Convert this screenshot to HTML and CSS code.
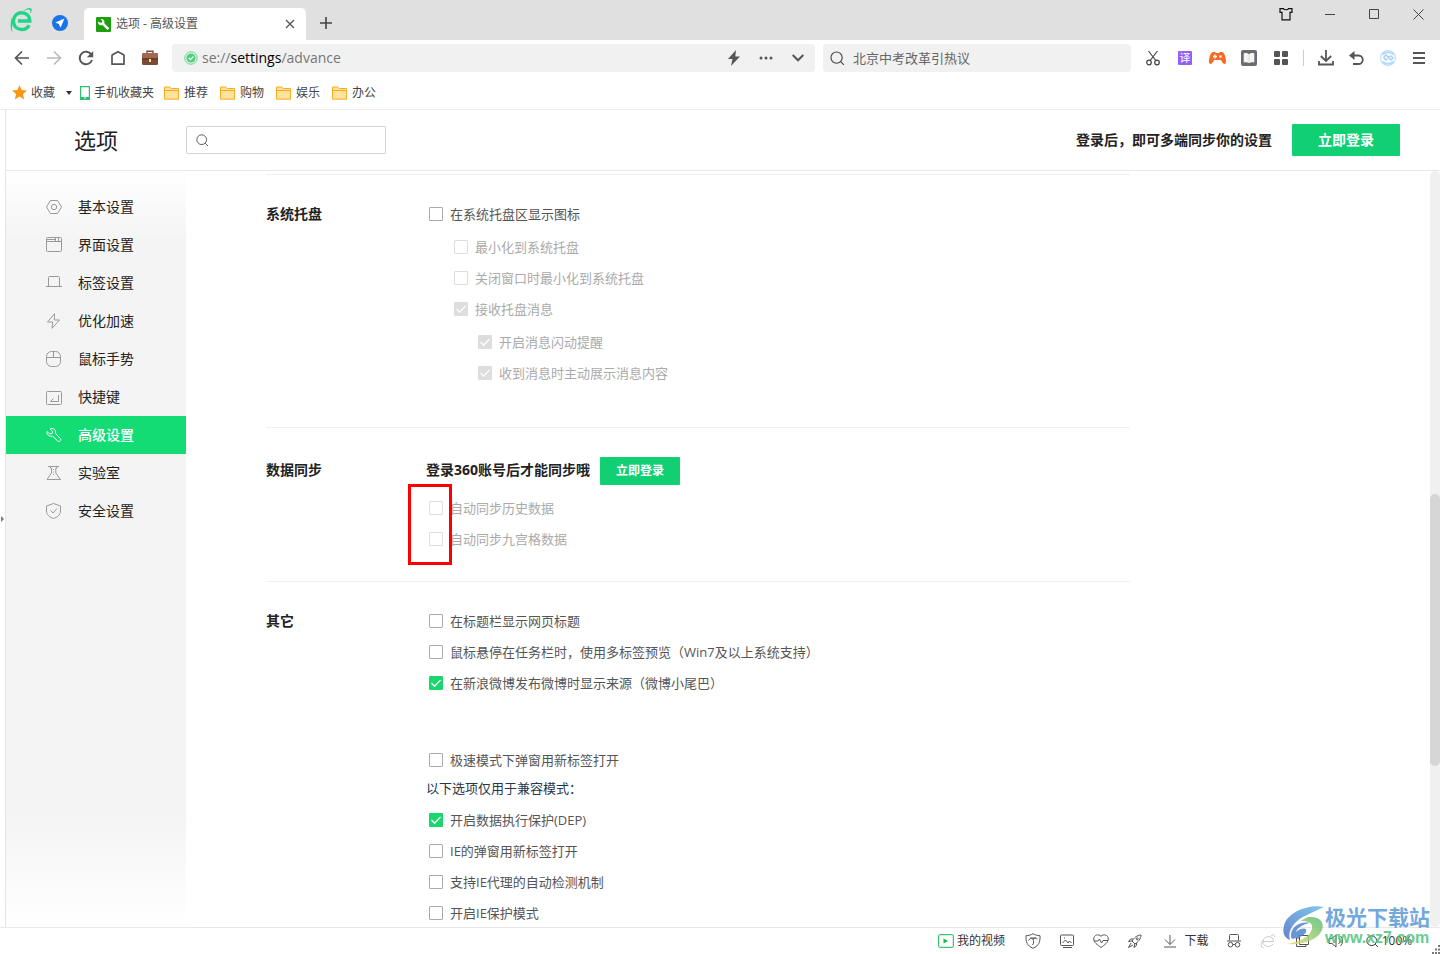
FILE: index.html
```html
<!DOCTYPE html>
<html lang="zh-CN">
<head>
<meta charset="utf-8">
<title>选项 - 高级设置</title>
<link rel="stylesheet" href="styles.css">
</head>
<body>
<svg class="defs" aria-hidden="true">
  <symbol id="folder" viewBox="0 0 16 14"><path d="M.5 1h5.2l1.600 1.500h7.200v10.700H.5z" fill="#ffe1a0" stroke="#f9ab1f"/><path d="M1 4.500h13" stroke="#f9ab1f"/></symbol>
  <symbol id="lens" viewBox="0 0 16 16"><circle cx="7" cy="7" r="6" fill="none" stroke="currentColor" stroke-width="1.2"/><path d="M11.4 11.4l3.4 3.4" stroke="currentColor" stroke-width="1.2"/></symbol>
</svg>

<header class="titlebar">
  <button class="app-logo" aria-label="浏览器"><svg width="24" height="26" viewBox="0 0 24 26"><path d="M3.400 13.500C4 8.500 7.500 5.700 11.500 5.700c5 0 8.300 3.300 8.300 8.300H8M3.300 13c0 6.500 3.700 9.500 8.200 9.500 3.700 0 6.300-1.600 7.600-4.300" fill="none" stroke="#1fd587" stroke-width="3.400"/><path d="M12 5C16 1 20.500 0 21.500 1.800c.6 1.200 0 3-1.200 4.600.3-1.700.2-2.900-.7-3.400C18 2 15 3 12 5zM2 10C.5 15-.3 22 2.500 25c-1-4-.3-8 .8-11z" fill="#1fd587"/></svg></button>
  <button class="compass" aria-label="导航"><svg width="16" height="16" viewBox="0 0 16 16"><circle cx="8" cy="8" r="8" fill="#1a73e8"/><path d="M12.500 3.500L3.300 7.600l3.600 1.400L8.500 12.700z" fill="#fff"/></svg></button>
  <div class="tab">
    <svg width="15" height="15" viewBox="0 0 15 15"><rect width="15" height="15" rx="1" fill="#1f9e12"/><path d="M2 4.500A3.200 3.200 0 0 0 6.500 8l5 5 1.800-1.800-5-5A3.200 3.200 0 0 0 4.600 2l1.700 1.900-.3 1.500-1.600.4z" fill="#fff"/></svg>
    <span class="tab-title">选项 - 高级设置</span>
    <button aria-label="关闭标签"><svg width="10" height="10" viewBox="0 0 10 10"><path d="M1 1l8 8M9 1L1 9" stroke="#555" stroke-width="1.300"/></svg></button>
  </div>
  <button class="new-tab" aria-label="新建标签"><svg width="12" height="12" viewBox="0 0 12 12"><path d="M6 0v12M0 6h12" stroke="#444" stroke-width="1.600"/></svg></button>
  <div class="window-controls">
    <button aria-label="皮肤"><svg width="14" height="13" viewBox="0 0 14 13"><path d="M1 .600h3.500c.5 1.500 4.500 1.500 5 0H13v3.800h-2v7.500H3V4.400H1z" fill="none" stroke="#111" stroke-width="1.200"/></svg></button>
    <button aria-label="最小化"><svg width="10" height="10" viewBox="0 0 10 10"><path d="M0 5.500h10" stroke="#444"/></svg></button>
    <button aria-label="最大化"><svg width="10" height="10" viewBox="0 0 10 10"><path d="M.5.500h9v9h-9z" fill="none" stroke="#444"/></svg></button>
    <button aria-label="关闭"><svg width="11" height="11" viewBox="0 0 11 11"><path d="M.5.500l10 10M10.500.500l-10 10" stroke="#444"/></svg></button>
  </div>
</header>

<nav class="toolbar" aria-label="工具栏">
  <div class="tools">
    <button aria-label="后退"><svg width="16" height="16" viewBox="0 0 16 16"><path d="M15 8H2M8 1.500L1.500 8 8 14.500" fill="none" stroke="#555" stroke-width="1.700"/></svg></button>
    <button aria-label="前进"><svg width="16" height="16" viewBox="0 0 16 16"><path d="M1 8h13M8 1.500L14.500 8 8 14.500" fill="none" stroke="#bbb" stroke-width="1.700"/></svg></button>
    <button aria-label="刷新"><svg width="16" height="16" viewBox="0 0 16 16"><path d="M13.300 4.500A6.300 6.300 0 1 0 14 10" fill="none" stroke="#555" stroke-width="1.900"/><path d="M15.200 1v6.300H8.800z" fill="#555"/></svg></button>
    <button aria-label="主页"><svg width="16" height="16" viewBox="0 0 16 16"><path d="M2 5.500Q2 5 2.500 4.700L8 1.700l5.500 3q.5.300.5.800v8.700H2z" fill="none" stroke="#555" stroke-width="1.700" stroke-linejoin="round"/></svg></button>
    <button aria-label="工具箱"><svg width="16" height="16" viewBox="0 0 16 16"><path d="M5 3V1.200h6V3" fill="none" stroke="#7a4938" stroke-width="1.400"/><rect y="3" width="16" height="12" rx="1.500" fill="#7b4b38"/><rect y="3" width="16" height="5" rx="1.500" fill="#a5674d"/><path d="M0 9h16" stroke="#54301f"/><rect x="7" y="9" width="2" height="3" fill="#ffe08a"/></svg></button>
  </div>
  <div class="address">
    <svg width="14" height="14" viewBox="0 0 14 14"><circle cx="7" cy="7" r="6.200" fill="none" stroke="#5fd88a"/><circle cx="7" cy="7" r="4.600" fill="#4fd07e"/><path d="M4.800 7l1.700 1.700L9.400 5.500" fill="none" stroke="#fff" stroke-width="1.200"/></svg>
    <span class="url">se://<b>settings</b>/advance</span>
    <button aria-label="极速模式"><svg width="14" height="16" viewBox="0 0 14 16"><path d="M9 0L1 9h4.500L4 16l9-9.500H8.300z" fill="#555"/></svg></button>
    <button aria-label="更多"><svg width="14" height="4" viewBox="0 0 14 4"><g fill="#555"><circle cx="2" cy="2" r="1.500"/><circle cx="7" cy="2" r="1.500"/><circle cx="12" cy="2" r="1.500"/></g></svg></button>
    <button aria-label="展开"><svg width="12" height="8" viewBox="0 0 12 8"><path d="M.7 1L6 6.300 11.300 1" fill="none" stroke="#555" stroke-width="2"/></svg></button>
  </div>
  <label class="websearch">
    <svg width="15" height="15"><use href="#lens"/></svg>
    <input type="text" placeholder="北京中考改革引热议" aria-label="搜索">
  </label>
  <div class="tools">
    <button aria-label="截图"><svg width="14" height="16" viewBox="0 0 14 16"><g fill="none" stroke="#444" stroke-width="1.200"><circle cx="3" cy="12.500" r="2.300"/><circle cx="11" cy="12.500" r="2.300"/><path d="M2.500 1L9.800 10.500M11.500 1L4.200 10.500"/></g></svg></button>
    <button class="translate" aria-label="翻译"><span>译</span></button>
    <button aria-label="游戏"><svg width="17" height="14" viewBox="0 0 17 14"><path d="M4 1h2l1 1h3l1-1h2c2 0 4 5 4 9.500 0 3.500-2.500 3-4 .5L12 9H5l-1 2c-1.500 2.500-4 3-4-.5C0 6 2 1 4 1z" fill="#fb6a25"/><path d="M4 5.500h4M6 3.500v4" stroke="#fff" stroke-width="1.300"/><circle cx="11.500" cy="5.500" r="1.300" fill="#fff"/></svg></button>
    <button aria-label="阅读"><svg width="16" height="16" viewBox="0 0 16 16"><rect width="16" height="16" rx="2" fill="#6b6b72"/><path d="M2.700 3.500c2-.8 4-.3 5.300.8 1.300-1.100 3.300-1.600 5.300-.8v9c-2-.5-4-.2-5.300.5-1.300-.7-3.300-1-5.300-.5z" fill="#f4f4f0"/><path d="M8 4.500V13" stroke="#ddd"/></svg></button>
    <button aria-label="扩展"><svg width="14" height="14" viewBox="0 0 14 14"><g fill="#555"><rect width="6" height="6" rx="1"/><rect x="8" width="6" height="6" rx="1"/><rect y="8" width="6" height="6" rx="1"/><rect x="8" y="8" width="6" height="6" rx="1"/></g></svg></button>
  </div>
  <i class="divider"></i>
  <div class="tools narrow">
    <button aria-label="下载"><svg width="16" height="16" viewBox="0 0 16 16"><path d="M8 0v11M2.800 6L8 11l5.200-5M1 11v3.500h14V11" fill="none" stroke="#555" stroke-width="1.800"/></svg></button>
    <button aria-label="恢复"><svg width="15" height="14" viewBox="0 0 15 14"><path d="M2 4.500h7.500a4.200 4.200 0 0 1 0 8.500H4" fill="none" stroke="#555" stroke-width="1.800"/><path d="M5.500 0v9L0 4.500z" fill="#555"/></svg></button>
    <button aria-label="账号"><svg width="16" height="16" viewBox="0 0 16 16"><circle cx="8" cy="8" r="7.400" fill="#fff" stroke="#bfdffa" stroke-width="1.200"/><path d="M2.500 4.500C5 1.500 11 1.500 13.500 4.500M2.500 11.500c2.500 3 8.500 3 11 0" fill="none" stroke="#b4dafa" stroke-width="2"/><path d="M3.500 7.500L6 5l5 5 2-2-2.500-2.500M3.500 7.500L6 10l1.500-1.500M8.500 7.500L10 6" fill="none" stroke="#9fcdf8" stroke-width="1.400"/></svg></button>
    <button aria-label="菜单"><svg width="12" height="12" viewBox="0 0 12 12"><path d="M0 1h12M0 6h12M0 11h12" stroke="#555" stroke-width="2"/></svg></button>
  </div>
</nav>

<nav class="bookmarks" aria-label="收藏栏">
  <a class="fav" href="#"><svg width="15" height="15" viewBox="0 0 15 15"><path d="M7.500 0l2.100 5.100 5.400.4-4.100 3.600 1.300 5.400-4.700-2.900-4.700 2.900 1.300-5.400L0 5.500l5.400-.4z" fill="#fb9612"/></svg>收藏<svg class="caret" width="6" height="4" viewBox="0 0 6 4"><path d="M0 0h6L3 4z" fill="#333"/></svg></a>
  <a class="phone" href="#"><svg width="10" height="14" viewBox="0 0 10 14"><path d="M.6.600h8.800v12.800H.6z" fill="#fff" stroke="#2fbf71" stroke-width="1.200"/><path d="M1 11h8v2H1z" fill="#2fbf71"/><path d="M4 12h2" stroke="#fff"/></svg>手机收藏夹</a>
  <a href="#"><svg width="16" height="14"><use href="#folder"/></svg>推荐</a>
  <a href="#"><svg width="16" height="14"><use href="#folder"/></svg>购物</a>
  <a href="#"><svg width="16" height="14"><use href="#folder"/></svg>娱乐</a>
  <a href="#"><svg width="16" height="14"><use href="#folder"/></svg>办公</a>
</nav>

<div class="viewport">
  <button class="side-handle" aria-label="展开侧栏"><svg width="3" height="6" viewBox="0 0 3 6"><path d="M0 0l3 3-3 3z" fill="#777"/></svg></button>
  <div class="page">
    <header class="page-head">
      <h1>选项</h1>
      <label class="find"><svg width="13" height="13"><use href="#lens"/></svg><input type="text" aria-label="搜索设置"></label>
      <p>登录后，即可多端同步你的设置</p>
      <button class="primary large">立即登录</button>
    </header>
    <div class="page-body">
      <nav class="menu" aria-label="设置分类">
        <a href="#"><svg viewBox="0 0 16 16"><path d="M4.500 1.500h7L15.500 8l-4 6.500h-7L.5 8z"/><circle cx="8" cy="8" r="2.700"/></svg>基本设置</a>
        <a href="#"><svg viewBox="0 0 16 16"><rect x=".5" y=".500" width="15" height="14" rx="1"/><path d="M1 4.500h14M9.500 1v3M12.500 1v3M1 2.500h8"/></svg>界面设置</a>
        <a href="#"><svg viewBox="0 0 16 16"><path d="M2.500 11V2.500a1 1 0 0 1 1-1h9a1 1 0 0 1 1 1V11M0 11.500h16"/></svg>标签设置</a>
        <a href="#"><svg viewBox="0 0 16 16"><path d="M8.500.700L1.500 9h5.200L6 15.300 13.500 7H8.300z"/></svg>优化加速</a>
        <a href="#"><svg viewBox="0 0 16 16"><rect x=".5" y=".500" width="14" height="15" rx="5"/><path d="M.5 6.500h14M7.500 1v5.500"/></svg>鼠标手势</a>
        <a href="#"><svg viewBox="0 0 16 16"><rect x=".5" y="2.500" width="15" height="13" rx="1"/><path d="M12.500 6v6.500h-8l3-3"/></svg>快捷键</a>
        <a class="current" href="#" aria-current="page"><svg viewBox="0 0 16 16"><path d="M5 1.500C8 1 10 3 9.300 6.200l5 5.300c1.500 1.700-1 4-2.600 2.500L6.500 9C3.500 10 .500 8 1 4.500L3.700 7 6.500 6V4.200L4.200 2z"/></svg>高级设置</a>
        <a href="#"><svg viewBox="0 0 16 16"><path d="M2 1.500h11M4.500 1.500v1.700h1V8L1 14.500h13.500L9.800 8V3.200h1V1.500M7.500 4v1M7.500 6.500v1M7.500 9v1"/></svg>实验室</a>
        <a href="#"><svg viewBox="0 0 16 16"><path d="M7.500.500L14.500 3v5c0 4-3.500 6.300-7 7.500C4 14.300.500 12 .500 8V3zM4.500 7.500l2.500 2.500 4-4.500"/></svg>安全设置</a>
      </nav>

      <main class="settings">
        <section>
          <h2>系统托盘</h2>
          <div>
            <label class="opt"><input type="checkbox">在系统托盘区显示图标</label>
            <div class="sub">
              <label class="opt"><input type="checkbox" disabled>最小化到系统托盘</label>
              <label class="opt"><input type="checkbox" disabled>关闭窗口时最小化到系统托盘</label>
              <label class="opt"><input type="checkbox" disabled checked>接收托盘消息</label>
              <div class="sub">
                <label class="opt"><input type="checkbox" disabled checked>开启消息闪动提醒</label>
                <label class="opt"><input type="checkbox" disabled checked>收到消息时主动展示消息内容</label>
              </div>
            </div>
          </div>
        </section>
        <section class="sync">
          <h2>数据同步</h2>
          <div>
            <div class="login-line"><strong>登录360账号后才能同步哦</strong><button class="primary">立即登录</button></div>
            <div class="marked">
              <label class="opt"><input type="checkbox" disabled>自动同步历史数据</label>
              <label class="opt"><input type="checkbox" disabled>自动同步九宫格数据</label>
              <i class="highlight"></i>
            </div>
          </div>
        </section>
        <section class="others">
          <h2>其它</h2>
          <div>
            <label class="opt"><input type="checkbox">在标题栏显示网页标题</label>
            <label class="opt"><input type="checkbox">鼠标悬停在任务栏时，使用多标签预览（Win7及以上系统支持）</label>
            <label class="opt"><input type="checkbox" checked>在新浪微博发布微博时显示来源（微博小尾巴）</label>
            <div class="modes">
              <label class="opt"><input type="checkbox">极速模式下弹窗用新标签打开</label>
              <p>以下选项仅用于兼容模式：</p>
              <label class="opt"><input type="checkbox" checked>开启数据执行保护(DEP)</label>
              <label class="opt"><input type="checkbox">IE的弹窗用新标签打开</label>
              <label class="opt"><input type="checkbox">支持IE代理的自动检测机制</label>
              <label class="opt"><input type="checkbox">开启IE保护模式</label>
            </div>
          </div>
        </section>
      </main>
      <div class="track"><i class="thumb"></i></div>
    </div>
  </div>
</div>

<footer class="status">
  <button class="video"><svg width="16" height="14" viewBox="0 0 16 14"><rect class="frame" x=".7" y=".700" width="14.600" height="12.600" rx="1"/><path class="play" d="M5.500 4.500l4.500 2.500-4.500 2.500z"/></svg>我的视频</button>
  <button aria-label="安全"><svg viewBox="0 0 16 16"><path d="M8 .700C6 2 3.500 2.600 1 2.700c-.3 6 1 10 7 12.600 6-2.600 7.300-6.600 7-12.600C12.500 2.600 10 2 8 .700zM3.500 7.500C4.500 5.500 6 5 8 6c1.500-1.500 3.500-1 4.500 0M8 6c1 2 .8 4-.5 6M5 5h6"/></svg></button>
  <button aria-label="图片"><svg viewBox="0 0 16 16"><rect x="1.500" y="2" width="13" height="10.500" rx="1"/><path d="M3.500 10l3-3 2.500 3 1.500-2 2 2M4 14.500h9M5 5h1"/></svg></button>
  <button aria-label="健康"><svg viewBox="0 0 16 16"><path d="M8 3.300C5.500.500.700 2 .700 6c0 3.300 3.800 6 7.300 8.500C11.500 12 15.300 9.300 15.300 6c0-4-4.800-5.500-7.300-2.700zM1 8h4l1.500-2 2 4L10 7.500h5"/></svg></button>
  <button aria-label="加速"><svg viewBox="0 0 16 16"><path d="M14 2c-4 0-7 3-9 6l3 3c3-2 6-5 6-9zM6 6H3.500L1.500 8.500 5 8M9.500 10v2.500L7 14.500l.8-3.700M4 10l-2.500 4.500L6 12"/><circle cx="10.200" cy="5.800" r="1"/></svg></button>
  <button class="download"><svg width="12" height="14" viewBox="0 0 12 14"><path d="M6 1v9.500M1 5.500l5 5 5-5M0 13h12"/></svg>下载</button>
  <button aria-label="无痕"><svg viewBox="0 0 16 16"><path d="M3.500 7.500v-5a1 1 0 0 1 1-1h7a1 1 0 0 1 1 1v5M1 8h14M6.700 11.500h2.600"/><circle cx="4.500" cy="11.700" r="2.300"/><circle cx="11.500" cy="11.700" r="2.300"/></svg></button>
  <button class="dim" aria-label="兼容模式"><svg viewBox="0 0 16 16"><path d="M3 8.500h10.500C13.500 5 11 3.500 8.500 3.500S3 5.500 3 8.500s2 5 5 5c2 0 4-.8 5-2.500M11 3c2.500-2 4-1.500 3.500 1.500M3 7C.5 11 .5 15 3.500 14.500"/></svg></button>
  <button aria-label="分屏"><svg viewBox="0 0 16 16"><path d="M5.500 2.500h9v9h-9zM5 5H2.500v8.500H12V12"/></svg></button>
  <button aria-label="声音"><svg viewBox="0 0 16 16"><path d="M1 5.500h3L8 2v12L4 10.500H1zM10.500 5a4 4 0 0 1 0 6M12.500 3a7 7 0 0 1 0 10"/></svg></button>
  <button class="zoom"><svg width="13" height="13"><use href="#lens"/></svg>100%</button>
  <svg class="grip" width="9" height="9" viewBox="0 0 9 9"><path d="M7 0h2v2H7zM4 3.500h2v2H4zM7 3.500h2v2H7zM1 7h2v2H1zM4 7h2v2H4zM7 7h2v2H7z"/></svg>
</footer>

<div class="watermark">
  <svg width="42" height="40" viewBox="0 0 42 40"><defs><linearGradient id="wa" x1="0" y1="1" x2="1" y2="0"><stop offset="0" stop-color="#4c6fc0"/><stop offset="1" stop-color="#69c0f0"/></linearGradient><linearGradient id="wb" x1="0" y1="1" x2="1" y2="0"><stop offset="0" stop-color="#e3df72"/><stop offset="1" stop-color="#55bd78"/></linearGradient></defs><path d="M41 1C26-2 4 6 1 20c-2 8 1 12 6 14C4 24 12 14 24 9c6-3 12-6 17-8z" fill="url(#wa)"/><path d="M26 11c10-1 16 5 13 13C35 34 20 39 4 38c12-2 23-7 25-15 1-6-3-8-11-8 3-2 5-3.500 8-4z" fill="url(#wb)"/><path d="M8 31C7 21 17 15 27 17c-7 1-13 5-14 9 4-4 12-5 10 0-2 4-8 6-14 7z" fill="#4f86cf"/></svg>
  <div><b>极光下载站</b><span>www.xz7.com</span></div>
</div>
</body>
</html>
```

FILE: styles.css
```css
* { box-sizing: border-box; }
body {
  margin: 0;
  height: 100vh;
  display: flex;
  flex-direction: column;
  overflow: hidden;
  background: #fff;
  color: #222;
  font: 13px/20px "Open Sans", "Noto Sans CJK SC", sans-serif;
}
button {
  display: flex;
  align-items: center;
  justify-content: center;
  padding: 0;
  border: 0;
  background: none;
  color: inherit;
  font: inherit;
}
a { color: inherit; text-decoration: none; }
h1, h2, p { margin: 0; }
svg { flex: none; display: block; }
input { font: inherit; color: inherit; outline: 0; }
.defs { position: absolute; width: 0; height: 0; }

/* Window chrome */
.titlebar {
  flex: none;
  height: 40px;
  display: flex;
  align-items: center;
  padding-left: 10px;
  background: #e0e0e0;
}
.compass { margin: 6px 16px 0 18px; }
.tab {
  align-self: flex-end;
  width: 222px;
  height: 32px;
  display: flex;
  align-items: center;
  gap: 5px;
  padding: 0 11px 0 12px;
  border-radius: 5px 5px 0 0;
  background: #fff;
  color: #555;
  font-size: 12px;
}
.tab-title { flex: 1; }
.new-tab { margin: 6px 0 0 14px; }
.window-controls {
  align-self: flex-start;
  margin-left: auto;
  height: 28px;
  display: flex;
}
.window-controls button { width: 44px; }

.toolbar {
  flex: none;
  display: flex;
  align-items: center;
  padding: 4px 6px;
}
.tools { display: flex; }
.tools button { width: 32px; height: 28px; }
.tools.narrow button { width: 31px; }
.address, .websearch {
  height: 28px;
  display: flex;
  align-items: center;
  border-radius: 4px;
  background: #f1f1f1;
}
.address {
  flex: 1;
  margin: 0 8px 0 6px;
  padding: 0 3px 0 12px;
  gap: 4px;
}
.address button { width: 28px; height: 28px; }
.url { flex: 1; color: #777; font-size: 14px; }
.url b { color: #000; font-weight: 400; }
.websearch {
  flex: 0 1 308px;
  margin-right: 6px;
  padding: 0 7px;
  gap: 8px;
  color: #444;
}
.websearch input, .find input {
  flex: 1;
  min-width: 0;
  padding: 0;
  border: 0;
  background: none;
}
.websearch input::placeholder { color: #666; opacity: 1; }
.translate span {
  width: 14px;
  height: 14px;
  border-radius: 1px;
  background: #9161f3;
  color: #fff;
  font-size: 11px;
  line-height: 14px;
}
.divider { width: 1px; height: 16px; margin: 0 6px; background: #ccc; }

.bookmarks {
  flex: none;
  height: 34px;
  display: flex;
  align-items: center;
  gap: 12px;
  padding-left: 12px;
  border-bottom: 1px solid #ebebeb;
  color: #444;
  font-size: 12px;
}
.bookmarks a { display: flex; align-items: center; gap: 4px; }
.bookmarks .fav { margin-right: -4px; }
.bookmarks .phone { margin-right: -2px; }
.caret { margin-left: 7px; }

/* Settings page */
.viewport { flex: 1; min-height: 0; display: flex; }
.side-handle { width: 5px; justify-content: center; }
.page {
  flex: 1;
  min-width: 0;
  display: flex;
  flex-direction: column;
  border-left: 1px solid #e4e4e4;
}
.page-head {
  flex: none;
  height: 61px;
  display: flex;
  align-items: center;
  padding-right: 40px;
  border-bottom: 1px solid #e8e8e8;
}
h1 { width: 180px; text-align: center; font-size: 22px; font-weight: 400; line-height: 32px; }
.find {
  width: 200px;
  height: 28px;
  display: flex;
  align-items: center;
  gap: 8px;
  padding: 0 9px;
  border: 1px solid #d4d4d4;
  border-radius: 1px;
  color: #555;
}
.page-head p { margin: 0 20px 0 auto; font-size: 14px; font-weight: 700; }
.primary {
  width: 80px;
  height: 28px;
  border-radius: 1px;
  background: #11cf73;
  color: #fff;
  font-size: 12px;
  font-weight: 700;
}
.primary.large { width: 108px; height: 32px; font-size: 14px; }
.page-body { flex: 1; min-height: 0; display: flex; }
.menu {
  width: 180px;
  padding-top: 17px;
  background: linear-gradient(#fff, #f4f4f4 70px, #f4f4f4 85%, #fff);
  font-size: 14px;
}
.menu a { height: 38px; display: flex; align-items: center; gap: 16px; padding-left: 40px; }
.menu svg { width: 16px; height: 16px; fill: none; stroke: #999; }
.menu .current { background: #12dc73; color: #fff; font-weight: 500; }
.menu .current svg { stroke: #fff; }

.settings { flex: 1; min-width: 0; padding: 3px 80px 0; overflow: hidden; }
section {
  max-width: 864px;
  display: grid;
  grid-template-columns: 160px 1fr;
  padding: 23px 0 39px;
  border-top: 1px solid #f0f0f0;
}
h2 { font-size: 14px; line-height: 31px; font-weight: 700; }
.sync { padding: 29px 0 27px; }
.sync h2, .login-line strong { line-height: 26px; }
.opt {
  height: 31px;
  display: flex;
  align-items: center;
  gap: 7px;
  padding-left: 3px;
  color: #555;
}
.opt:has(:disabled) { color: #aaa; }
.opt input {
  appearance: none;
  flex: none;
  width: 14px;
  height: 14px;
  margin: 0;
  border: 1px solid #aaa;
  border-radius: 1px;
  background: #fff center / 14px 14px no-repeat;
}
.opt input:disabled { border-color: #ddd; }
.opt input:checked {
  border-color: #17d76d;
  background-color: #17d76d;
  background-image: url("data:image/svg+xml,%3Csvg xmlns='http://www.w3.org/2000/svg' viewBox='0 0 14 14'%3E%3Cpath d='M2.500 7l3 3.200L11.500 4' fill='none' stroke='white' stroke-width='1.300'/%3E%3C/svg%3E");
}
.opt input:checked:disabled { border-color: #ddd; background-color: #ddd; }
.sub { margin-top: 2px; padding-left: 25px; }
.sub .sub { padding-left: 24px; }
.login-line { display: flex; align-items: flex-start; gap: 10px; font-size: 14px; }
.marked { position: relative; margin-top: 7px; }
.highlight {
  position: absolute;
  top: -8px;
  left: -18px;
  width: 44px;
  height: 81px;
  border: 3px solid #f00;
}
.modes { margin-top: 46px; }
.modes p { margin-bottom: 2px; line-height: 27px; color: #26374d; }
.track {
  width: 10px;
  display: grid;
  grid-template-rows: 323fr 272fr 161fr;
  border-radius: 5px;
  background: #f0f0f0;
}
.thumb { grid-row: 2; border-radius: 5px; background: #d6d6d6; }

.status {
  position: relative;
  flex: none;
  height: 27px;
  display: flex;
  justify-content: flex-end;
  padding-right: 15px;
  border-top: 1px solid #e8e8e8;
  color: #333;
  font-size: 12px;
}
.status button { width: 34px; }
.status button svg { fill: none; stroke: #555; }
.status button svg[viewBox="0 0 16 16"] { width: 16px; height: 16px; }
.status .video { width: 78px; gap: 3px; justify-content: flex-start; }
.status .frame { stroke: #12b84f; }
.status .play { fill: #12b84f; stroke: none; }
.status .download { width: 65px; gap: 8px; padding-left: 4px; }
.status .zoom { width: 72px; gap: 3px; }
.status .dim svg { stroke: #ccc; }
.grip { position: absolute; right: 0; bottom: 0; fill: #777; }

.watermark {
  position: absolute;
  right: 10px;
  bottom: 7px;
  display: flex;
  align-items: center;
  opacity: 0.85;
  pointer-events: none;
}
.watermark div { display: flex; flex-direction: column; }
.watermark b { color: #5b99d8; font-size: 21px; line-height: 24px; }
.watermark span { color: #4fc27d; font: 700 16px/18px "Liberation Sans", sans-serif; }
```
